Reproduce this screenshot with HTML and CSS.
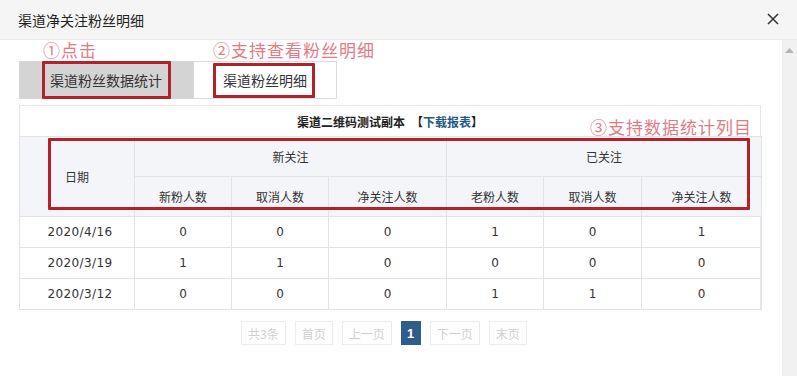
FILE: index.html
```html
<!DOCTYPE html>
<html lang="zh">
<head>
<meta charset="utf-8">
<title>渠道净关注粉丝明细</title>
<link rel="stylesheet" href="styles.css">
</head>
<body>
<div class="dialog">
  <div class="dlg-head">
    <span class="dlg-title">渠道净关注粉丝明细</span>
    <svg class="close" width="12" height="12" viewBox="0 0 12 12"><path d="M1 1 L11 11 M11 1 L1 11" stroke="#333" stroke-width="1.5" fill="none"/></svg>
  </div>
  <div class="dlg-main">
    <div class="content">
      <div class="tabs">
        <div class="tab tab-active">渠道粉丝数据统计</div>
        <div class="tab">渠道粉丝明细</div>
        <span class="note note1">①点击</span>
        <span class="note note2">②支持查看粉丝明细</span>
        <span class="redbox rb1"></span>
        <span class="redbox rb2"></span>
      </div>
      <div class="report">
        <div class="report-title">渠道二维码测试副本 <span class="bracket">【<span class="dl">下载报表</span>】</span></div>
        <span class="note note3">③支持数据统计列目</span>
        <span class="redbox rb3"></span>
        <table class="grid">
          <colgroup>
            <col style="width:115px"><col style="width:97px"><col style="width:97px"><col style="width:118px"><col style="width:97px"><col style="width:98px"><col style="width:120px">
          </colgroup>
          <thead>
            <tr class="h1">
              <th rowspan="2">日期</th>
              <th colspan="3">新关注</th>
              <th colspan="3">已关注</th>
            </tr>
            <tr class="h2">
              <th>新粉人数</th><th>取消人数</th><th>净关注人数</th>
              <th>老粉人数</th><th>取消人数</th><th>净关注人数</th>
            </tr>
          </thead>
          <tbody>
            <tr><td class="date">2020/4/16</td><td>0</td><td>0</td><td>0</td><td>1</td><td>0</td><td>1</td></tr>
            <tr><td class="date">2020/3/19</td><td>1</td><td>1</td><td>0</td><td>0</td><td>0</td><td>0</td></tr>
            <tr><td class="date">2020/3/12</td><td>0</td><td>0</td><td>0</td><td>1</td><td>1</td><td>0</td></tr>
          </tbody>
        </table>
      </div>
      <div class="pager">
        <span class="pg">共3条</span>
        <span class="pg">首页</span>
        <span class="pg">上一页</span>
        <span class="pg pg-on">1</span>
        <span class="pg">下一页</span>
        <span class="pg">末页</span>
      </div>
    </div>
    <div class="scrollbar">
      <svg width="9" height="5" viewBox="0 0 9 5"><path d="M0 5 L4.5 0 L9 5 Z" fill="#b5b5b5"/></svg>
    </div>
  </div>
</div>
</body>
</html>
```
FILE: styles.css
```css
* { box-sizing: border-box; }
html, body {
  margin: 0;
  padding: 0;
  background: #fff;
}
body {
  width: 797px;
  height: 376px;
  overflow: hidden;
  font-family: "DejaVu Sans", "Noto Sans CJK SC", sans-serif;
  color: #333;
}
.dialog {
  display: flex;
  flex-direction: column;
  height: 376px;
}
.dlg-head {
  height: 40px;
  flex: none;
  background: #f5f5f5;
  border-bottom: 1px solid #ececec;
  display: flex;
  align-items: center;
  justify-content: space-between;
  padding: 0 18px 0 18px;
}
.dlg-title {
  font-family: "Noto Sans CJK SC", sans-serif;
  font-size: 14px;
  color: #222;
}
.close { margin-top: -1px; }
.dlg-main {
  flex: 1;
  display: flex;
}
.content {
  width: 782px;
  padding: 21px 0 0 19px;
}
.scrollbar {
  width: 15px;
  background: #f1f1f1;
  display: flex;
  justify-content: center;
  padding-top: 8px;
}
.tabs {
  position: relative;
  display: flex;
  height: 38px;
  width: 318px;
}
.tab {
  font-family: "Noto Sans CJK SC", sans-serif;
  font-size: 14px;
  color: #333;
  display: flex;
  align-items: center;
  justify-content: center;
  border: 1px solid #dcdcdc;
  background: #fff;
  width: 144px;
}
.tab-active {
  width: 174px;
  background: #d4d4d4;
  border-color: #d4d4d4;
}
.note {
  position: absolute;
  font-family: "Noto Sans CJK SC", sans-serif;
  font-size: 17px;
  color: #e27b85;
  white-space: nowrap;
  line-height: 20px;
  letter-spacing: 1px;
}
.note1 { left: 24px; top: -21px; }
.note2 { left: 194px; top: -21px; }
.redbox {
  position: absolute;
  border: 3px solid #b3212d;
  border-radius: 1px;
}
.rb1 { left: 23px; top: 0; width: 129px; height: 38px; }
.rb2 { left: 194px; top: 2px; width: 102px; height: 35px; }
.report {
  position: relative;
  margin-top: 6px;
  width: 742px;
  border: 1px solid #e6e6e6;
  border-bottom: none;
}
.report-title {
  height: 30px;
  display: flex;
  align-items: center;
  justify-content: center;
  font-family: "Noto Sans CJK SC", sans-serif;
  font-size: 12px;
  font-weight: bold;
  color: #222;
}
.bracket { margin-left: 6px; }
.dl { color: #1f5a85; }
.note3 { left: 570px; top: 11px; }
.rb3 { left: 28px; top: 32px; width: 702px; height: 72px; }
.grid {
  width: 741px;
  border-collapse: collapse;
  table-layout: fixed;
  font-size: 12px;
  margin-left: -1px;
}
.grid th, .grid td {
  border: 1px solid #e3e3e3;
  text-align: center;
  padding: 0;
}
.grid th {
  font-family: "Noto Sans CJK SC", sans-serif;
  font-weight: normal;
  background: #f4f5f9;
  color: #333;
}
.grid tr.h1 th { height: 40px; }
.grid tr.h2 th { height: 40px; }
.grid td {
  height: 31px;
  font-family: "DejaVu Sans", "Noto Sans CJK SC", sans-serif;
  color: #333;
  font-size: 12px;
}
.grid td.date {
  padding-left: 6px;
  letter-spacing: 0.4px;
}
.pager {
  display: flex;
  gap: 9px;
  margin-top: 11px;
  padding-left: 222px;
}
.pg {
  height: 24px;
  padding: 0 6px;
  border: 1px solid #ececec;
  font-family: "Noto Sans CJK SC", sans-serif;
  font-size: 12px;
  color: #cfcfcf;
  display: flex;
  align-items: center;
}
.pg-on {
  background: #2e5d8a;
  border-color: #2e5d8a;
  color: #fff;
  font-weight: bold;
  font-family: "Liberation Sans", sans-serif;
  font-size: 13px;
  width: 20px;
  justify-content: center;
}
```
